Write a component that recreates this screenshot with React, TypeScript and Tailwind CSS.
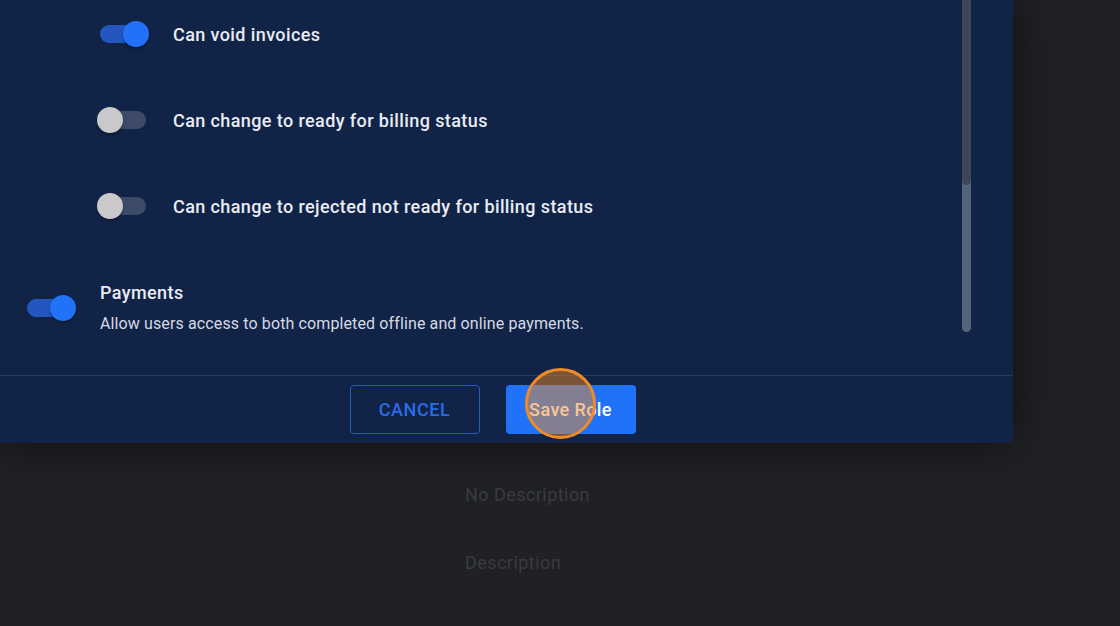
import React from "react"

function Toggle({ on }: { on: boolean }) {
  return (
    <div className="relative w-[52px] h-[26px] shrink-0">
      <div
        className={
          on
            ? "absolute left-[3px] right-[3px] top-[4px] h-[18px] rounded-full bg-[#2456c0]"
            : "absolute left-[3px] right-[3px] top-[4px] h-[18px] rounded-full bg-[#3e4b68]"
        }
      />
      <div
        className={
          on
            ? "absolute right-0 top-0 w-[26px] h-[26px] rounded-full bg-[#2272f8] shadow-[0_2px_3px_rgba(0,0,0,0.35)]"
            : "absolute left-0 top-0 w-[26px] h-[26px] rounded-full bg-[#c9c9cb] shadow-[0_2px_3px_rgba(0,0,0,0.35)]"
        }
      />
    </div>
  )
}

const permissions = [
  { label: "Can void invoices", on: true },
  { label: "Can change to ready for billing status", on: false },
  { label: "Can change to rejected not ready for billing status", on: false },
]

export default function App() {
  return (
    <div className="w-[1120px] h-[626px] overflow-hidden bg-[#202124] font-['Roboto',sans-serif]">
      <div className="w-[1013px] bg-[#112448] rounded-br-[5px] shadow-[0_0_45px_rgba(0,0,0,0.55)]">
        {/* scrolling body */}
        <div className="flex h-[375px]">
          <div className="flex-1 flex flex-col">
            {permissions.map((p, i) => (
              <div
                key={p.label}
                className={
                  i === 0
                    ? "h-[68px] flex items-center gap-[24px] pl-[97px]"
                    : "h-[68px] mt-[18px] flex items-center gap-[24px] pl-[97px]"
                }
              >
                <Toggle on={p.on} />
                <span className="text-[18px] font-medium tracking-[0.4px] text-[#e9ecf2]">{p.label}</span>
              </div>
            ))}
            <div className="mt-[41px] flex items-center gap-[24px] pl-[24px]">
              <Toggle on={true} />
              <div className="flex flex-col">
                <span className="text-[18px] font-medium leading-[24px] tracking-[0.4px] text-[#e9ecf2]">Payments</span>
                <span className="mt-[8px] text-[16px] leading-[22px] tracking-[0.12px] text-[#d6dae3]">
                  Allow users access to both completed offline and online payments.
                </span>
              </div>
            </div>
          </div>
          {/* scrollbar */}
          <div className="w-[9px] mr-[42px] h-[332px] flex flex-col rounded-b-full bg-[#55637d]">
            <div className="h-[185px] rounded-b-full bg-[#3d4759]" />
          </div>
        </div>
        {/* footer */}
        <div className="border-t border-[#26395f] h-[68px] flex items-center justify-center gap-[26px] pr-[28px]">
          <button className="w-[130px] h-[49px] rounded-[4px] border border-[#2b5ac0] text-[18px] font-medium tracking-[0.6px] text-[#2c6be6]">
            CANCEL
          </button>
          <div className="relative">
            <button className="w-[130px] h-[49px] rounded-[4px] bg-[#2073f8] text-[18px] font-medium tracking-[0.4px] text-white">
              Save Role
            </button>
            <div className="absolute left-[19px] top-[-17px] w-[71px] h-[71px] rounded-full border-[3px] border-[#f08b26] bg-[rgba(240,138,36,0.48)]" />
          </div>
        </div>
      </div>
      {/* page content behind the dialog */}
      <div className="pl-[465px] flex flex-col">
        <span className="mt-[40px] text-[18px] leading-[24px] tracking-[0.45px] text-[#3a3b3f]">No Description</span>
        <span className="mt-[44px] text-[18px] leading-[24px] tracking-[0.45px] text-[#3a3b3f]">Description</span>
      </div>
    </div>
  )
}
